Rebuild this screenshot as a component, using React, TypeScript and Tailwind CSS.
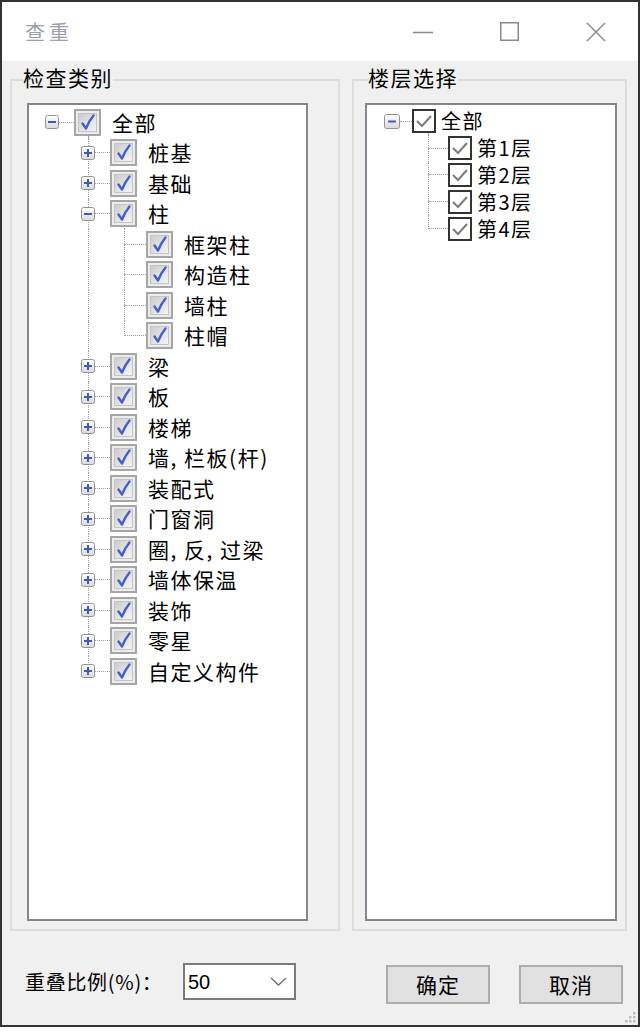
import React from "react";

type Row = {
  label: string;
  level: 0 | 1 | 2;
  exp?: "plus" | "minus";
  open?: boolean;
  last?: boolean;
};

const leftRows: Row[] = [
  { label: "全部", level: 0, exp: "minus", open: true },
  { label: "桩基", level: 1, exp: "plus" },
  { label: "基础", level: 1, exp: "plus" },
  { label: "柱", level: 1, exp: "minus", open: true },
  { label: "框架柱", level: 2 },
  { label: "构造柱", level: 2 },
  { label: "墙柱", level: 2 },
  { label: "柱帽", level: 2, last: true },
  { label: "梁", level: 1, exp: "plus" },
  { label: "板", level: 1, exp: "plus" },
  { label: "楼梯", level: 1, exp: "plus" },
  { label: "墙, 栏板(杆)", level: 1, exp: "plus" },
  { label: "装配式", level: 1, exp: "plus" },
  { label: "门窗洞", level: 1, exp: "plus" },
  { label: "圈, 反, 过梁", level: 1, exp: "plus" },
  { label: "墙体保温", level: 1, exp: "plus" },
  { label: "装饰", level: 1, exp: "plus" },
  { label: "零星", level: 1, exp: "plus" },
  { label: "自定义构件", level: 1, exp: "plus", last: true },
];

const floorRows: Row[] = [
  { label: "全部", level: 0, exp: "minus", open: true },
  { label: "第1层", level: 1 },
  { label: "第2层", level: 1 },
  { label: "第3层", level: 1 },
  { label: "第4层", level: 1, last: true },
];

const cjk = "font-['Noto_Sans_CJK_SC','Noto_Sans',sans-serif]";

// left tree geometry
const padLeft = { 0: "pl-[16px]", 1: "pl-[52px]", 2: "pl-[88px]" };
const trunkLeft = { 0: "", 1: "left-[59px]", 2: "left-[95px]" };
const childTrunkLeft = { 0: "left-[59px]", 1: "left-[95px]", 2: "" };

function Expander({ kind, w = 14, h = 14 }: { kind: "plus" | "minus"; w?: number; h?: number }) {
  const cx = w / 2;
  const cy = h / 2;
  return (
    <svg width={w} height={h} viewBox={`0 0 ${w} ${h}`} className="relative shrink-0">
      <defs>
        <linearGradient id="expg" x1="0" y1="0" x2="0" y2="1">
          <stop offset="0" stopColor="#ffffff" />
          <stop offset="1" stopColor="#d9d9d9" />
        </linearGradient>
      </defs>
      <rect x="0.5" y="0.5" width={w - 1} height={h - 1} rx="2" fill="url(#expg)" stroke="#939393" />
      <path d={`M${cx - 4} ${cy}H${cx + 4}`} stroke="#3d5db5" strokeWidth="2" />
      {kind === "plus" && <path d={`M${cx} ${cy - 4}V${cy + 4}`} stroke="#3d5db5" strokeWidth="2" />}
    </svg>
  );
}

function ThemedCheck() {
  return (
    <svg width="27" height="27" viewBox="0 0 27 27" className="shrink-0">
      <defs>
        <linearGradient id="cbg" x1="0" y1="0" x2="1" y2="1">
          <stop offset="0" stopColor="#cbcbcb" />
          <stop offset="1" stopColor="#f6f6f6" />
        </linearGradient>
      </defs>
      <rect x="1" y="1" width="25" height="25" fill="#ececec" stroke="#a6a6a6" strokeWidth="2" />
      <rect x="4.5" y="4.5" width="18" height="18" fill="url(#cbg)" stroke="#c4c4c4" />
      <path d="M8.5 14.5 L12 19.5 Q15 12 19.5 6.5" fill="none" stroke="#4560c4" strokeWidth="2.4" strokeLinecap="round" strokeLinejoin="round" />
    </svg>
  );
}

function PlainCheck() {
  return (
    <svg width="24" height="24" viewBox="0 0 24 24" className="shrink-0">
      <rect x="1" y="1" width="22" height="22" fill="#ffffff" stroke="#333333" strokeWidth="2" />
      <path d="M5 12 L10 17 L19 7" fill="none" stroke="#7c7c7c" strokeWidth="2" />
    </svg>
  );
}

function VLine({ className }: { className: string }) {
  return <span className={`absolute w-0 border-l border-dotted border-[#9c9c9c] ${className}`} />;
}

function CategoryTree() {
  return (
    <div className="pt-[2px]">
      {leftRows.map((r) => (
        <div key={r.label} className={`relative flex items-center h-[30.5px] ${padLeft[r.level]}`}>
          {/* tree lines */}
          {r.level === 2 && <VLine className="left-[59px] top-0 bottom-0" />}
          {r.level > 0 && <VLine className={`${trunkLeft[r.level]} top-0 ${r.last ? "h-1/2" : "bottom-0"}`} />}
          {r.open && <VLine className={`${childTrunkLeft[r.level]} top-[calc(50%+14px)] bottom-0`} />}

          {r.exp ? (
            <>
              <Expander kind={r.exp} />
              <span className="w-[15px] h-0 border-t border-dotted border-[#9c9c9c]" />
            </>
          ) : (
            <>
              <span className="w-[7px]" />
              <span className="w-[22px] h-0 border-t border-dotted border-[#9c9c9c]" />
            </>
          )}
          <ThemedCheck />
          <span className={`ml-[11px] text-[21px] tracking-[1.5px] leading-none text-black whitespace-nowrap ${cjk}`}>
            {r.label}
          </span>
        </div>
      ))}
    </div>
  );
}

function FloorTree() {
  return (
    <div className="pt-[3px]">
      {floorRows.map((r) => (
        <div key={r.label} className={`relative flex items-center h-[26.8px] ${r.level === 0 ? "pl-[17px]" : "pl-[53px]"}`}>
          {r.level === 1 && <VLine className={`left-[61px] top-0 ${r.last ? "h-1/2" : "bottom-0"}`} />}
          {r.open && <VLine className="left-[61px] top-[calc(50%+12px)] bottom-0" />}
          {r.exp ? (
            <>
              <Expander kind={r.exp} w={16} h={15} />
              <span className="w-[12px] h-0 border-t border-dotted border-[#9c9c9c]" />
            </>
          ) : (
            <>
              <span className="w-[8px]" />
              <span className="w-[20px] h-0 border-t border-dotted border-[#9c9c9c]" />
            </>
          )}
          <PlainCheck />
          <span className={`ml-[5px] text-[20px] tracking-[1.5px] leading-none text-black whitespace-nowrap ${cjk}`}>
            {r.label}
          </span>
        </div>
      ))}
    </div>
  );
}

function GroupBox({
  title,
  className,
  legendClass,
  children,
}: {
  title: string;
  className: string;
  legendClass: string;
  children: React.ReactNode;
}) {
  return (
    <fieldset className={`border-2 border-[#dcdcdc] pt-[11px] pb-[8px] ${className}`}>
      <legend className={`px-0 h-[24px] text-[21px] leading-[24px] tracking-[1.5px] text-black ${legendClass} ${cjk}`}>
        <span className="relative -top-[3px]">{title}</span>
      </legend>
      {children}
    </fieldset>
  );
}

export default function App() {
  return (
    <div className="w-[642px] h-[1031px] bg-white">
      <div className="relative w-[640px] h-[1027px] border-2 border-[#333333] flex flex-col">
        {/* Title bar */}
        <div className="h-[59px] bg-white flex items-center">
          <span className={`pl-[23px] text-[20px] tracking-[4px] text-[#9aa1aa] ${cjk}`}>查重</span>
          <div className="ml-auto flex items-center gap-[67px] pr-[32px]">
            <svg width="20" height="20" viewBox="0 0 20 20">
              <path d="M0 10.5H20" stroke="#8a8a8a" strokeWidth="1.5" />
            </svg>
            <svg width="19" height="19" viewBox="0 0 19 19">
              <rect x="0.75" y="0.75" width="17.5" height="17.5" fill="none" stroke="#8a8a8a" strokeWidth="1.5" />
            </svg>
            <svg width="20" height="20" viewBox="0 0 20 20">
              <path d="M1 1L19 19M19 1L1 19" stroke="#8a8a8a" strokeWidth="1.5" />
            </svg>
          </div>
        </div>

        {/* Body */}
        <div className="flex-1 bg-[#f0f0f0] flex flex-col">
          <div className="flex gap-[12px] ml-[8px] mt-[7px]">
            <GroupBox title="检查类别" className="w-[330px] pl-[15px] pr-[30px]" legendClass="-ml-[4px]">
              <div className="h-[818px] w-[281px] border-2 border-[#828790] bg-white overflow-hidden">
                <CategoryTree />
              </div>
            </GroupBox>
            <GroupBox title="楼层选择" className="w-[275px] pl-[11px] pr-[8px]" legendClass="ml-[3px]">
              <div className="h-[818px] w-[252px] border-2 border-[#828790] bg-white overflow-hidden">
                <FloorTree />
              </div>
            </GroupBox>
          </div>

          {/* Bottom controls */}
          <div className="flex items-start mt-[32px] pl-[23px]">
            <span className={`w-[158px] h-[37px] flex items-center text-[20px] tracking-[0.7px] text-black whitespace-nowrap ${cjk}`}>
              重叠比例(%)：
            </span>
            <div className="w-[113px] h-[37px] border-2 border-[#7a7a7a] bg-white flex items-center pl-[3px] pr-[7px]">
              <span className="font-['Liberation_Sans',Arial,sans-serif] text-[20px] text-black leading-none">50</span>
              <svg width="17" height="9" viewBox="0 0 17 9" className="ml-auto">
                <path d="M1 1L8.5 8L16 1" fill="none" stroke="#6d6d6d" strokeWidth="1.3" />
              </svg>
            </div>
            <button className={`ml-[90px] mt-[2px] w-[104px] h-[39px] border-2 border-[#adadad] bg-[#e1e1e1] text-[21px] tracking-[1px] text-black ${cjk}`}>
              确定
            </button>
            <button className={`ml-[29px] mt-[2px] w-[104px] h-[39px] border-2 border-[#adadad] bg-[#e1e1e1] text-[21px] tracking-[1px] text-black ${cjk}`}>
              取消
            </button>
          </div>
        </div>

        {/* resize grip */}
        <svg width="16" height="16" viewBox="0 0 16 16" className="absolute right-[1px] bottom-[1px]">
          {[
            [12, 4],
            [8, 8],
            [12, 8],
            [4, 12],
            [8, 12],
            [12, 12],
          ].map(([x, y]) => (
            <rect key={`${x}-${y}`} x={x} y={y} width="2.5" height="2.5" fill="#bdbdbd" />
          ))}
        </svg>
      </div>
    </div>
  );
}
